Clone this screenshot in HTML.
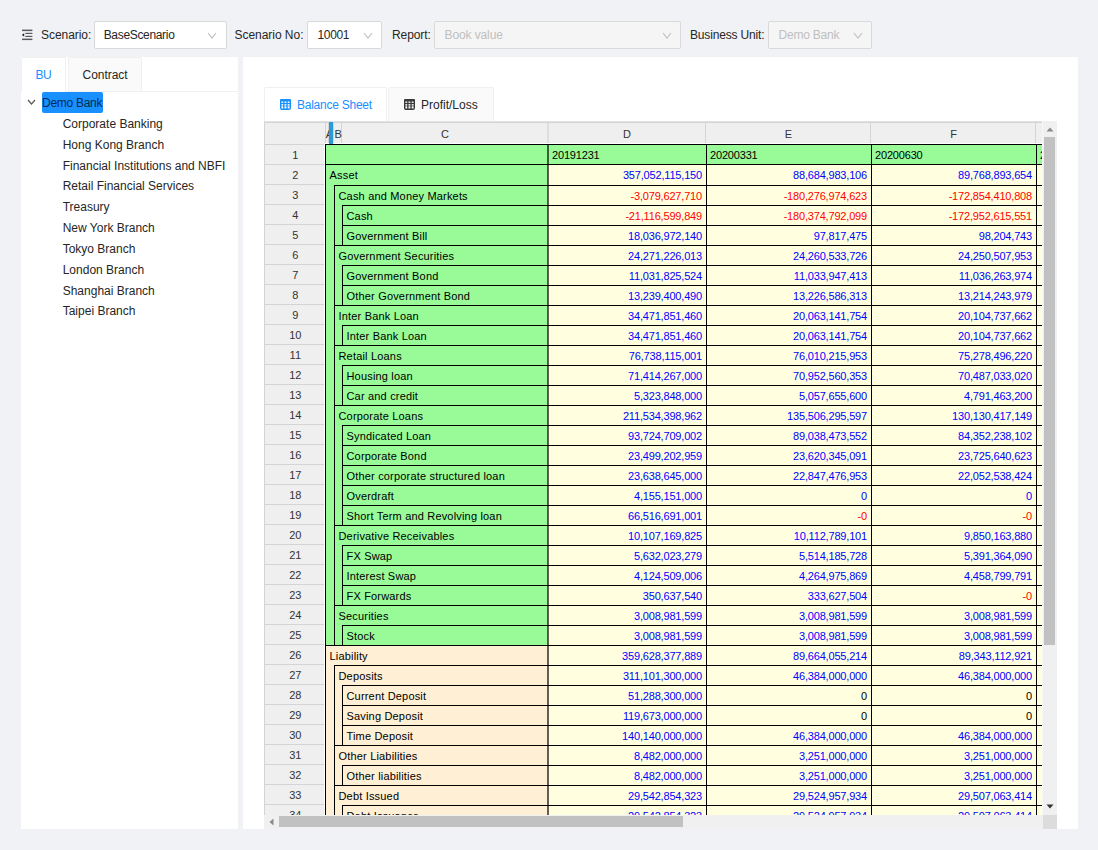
<!DOCTYPE html>
<html><head><meta charset="utf-8"><style>
html,body{margin:0;padding:0}
body{width:1098px;height:850px;background:#f0f2f5;position:relative;overflow:hidden;font-family:"Liberation Sans", sans-serif}
.t{position:absolute;white-space:nowrap;line-height:1;font-family:"Liberation Sans", sans-serif}
.r{position:absolute}
.sel{position:absolute;background:#fff;border:1px solid #d9d9d9;border-radius:2px}
.sel.dis{background:#f5f5f5}

</style></head><body>
<svg class="r" style="left:21px;top:29px" width="12" height="12" viewBox="0 0 12 12"><rect x="1" y="0.6" width="10.4" height="1.5" fill="#5a5a5a"/><rect x="4.4" y="3.8" width="7" height="1.2" fill="#5a5a5a"/><rect x="4.4" y="6.8" width="7" height="1.2" fill="#5a5a5a"/><rect x="1" y="9.6" width="10.4" height="1.5" fill="#5a5a5a"/><path d="M0.8 5.9 L3.2 4.2 L3.2 7.6 Z" fill="#1a1a1a"/></svg>
<div class="t" id="t_scen" style="left:41.00px;top:28.84px;font-size:12px;color:#262626;letter-spacing:-0.050px;">Scenario:</div>
<div class="sel" style="left:94px;top:21px;width:131px;height:26px"></div>
<div class="t" id="t_base" style="left:103.70px;top:28.84px;font-size:12px;color:#262626;letter-spacing:-0.327px;">BaseScenario</div>
<svg class="r" style="left:206.5px;top:31.5px" width="10" height="7" viewBox="0 0 10 7"><path d="M1 1 L5.0 6 L9 1" fill="none" stroke="#bfbfbf" stroke-width="1.1"/></svg>
<div class="t" id="t_scno" style="left:234.50px;top:28.84px;font-size:12px;color:#262626;letter-spacing:-0.036px;">Scenario No:</div>
<div class="sel" style="left:307px;top:21px;width:73px;height:26px"></div>
<div class="t" id="t_10001" style="left:317.60px;top:28.84px;font-size:12px;color:#262626;letter-spacing:-0.400px;">10001</div>
<svg class="r" style="left:362.5px;top:31.5px" width="10" height="7" viewBox="0 0 10 7"><path d="M1 1 L5.0 6 L9 1" fill="none" stroke="#bfbfbf" stroke-width="1.1"/></svg>
<div class="t" id="t_rep" style="left:392.00px;top:28.84px;font-size:12px;color:#262626;letter-spacing:-0.100px;">Report:</div>
<div class="sel dis" style="left:434px;top:21px;width:245px;height:26px"></div>
<div class="t" id="t_book" style="left:444.50px;top:28.84px;font-size:12px;color:#bfbfbf;letter-spacing:-0.111px;">Book value</div>
<svg class="r" style="left:661.5px;top:31.5px" width="10" height="7" viewBox="0 0 10 7"><path d="M1 1 L5.0 6 L9 1" fill="none" stroke="#bfbfbf" stroke-width="1.1"/></svg>
<div class="t" id="t_bu" style="left:690.00px;top:28.84px;font-size:12px;color:#262626;letter-spacing:-0.169px;">Business Unit:</div>
<div class="sel dis" style="left:768px;top:21px;width:102px;height:26px"></div>
<div class="t" id="t_dbdis" style="left:778.60px;top:28.84px;font-size:12px;color:#bfbfbf;letter-spacing:-0.225px;">Demo Bank</div>
<svg class="r" style="left:852.5px;top:31.5px" width="10" height="7" viewBox="0 0 10 7"><path d="M1 1 L5.0 6 L9 1" fill="none" stroke="#bfbfbf" stroke-width="1.1"/></svg>
<div class="r" style="left:21px;top:57px;width:217px;height:772px;background:#fff;"></div>
<div class="r" style="left:21px;top:91px;width:217px;height:1px;background:#f0f0f0;"></div>
<div class="r" style="left:21px;top:57px;width:43px;height:34px;background:#fff;border:1px solid #f0f0f0;border-bottom:none;border-radius:2px 2px 0 0"></div>
<div class="r" style="left:22px;top:91px;width:43px;height:1px;background:#fff;"></div>
<div class="t" id="t_tabbu" style="left:35.50px;top:68.84px;font-size:12px;color:#1890ff;letter-spacing:-0.600px;">BU</div>
<div class="r" style="left:68px;top:57px;width:72px;height:33px;background:#fafafa;border:1px solid #f0f0f0;border-radius:2px 2px 0 0"></div>
<div class="t" id="t_contract" style="left:82.50px;top:68.84px;font-size:12px;color:#262626;letter-spacing:-0.029px;">Contract</div>
<svg class="r" style="left:27px;top:99px" width="9" height="6" viewBox="0 0 9 6"><path d="M1 1 L4.5 5 L8 1" fill="none" stroke="#595959" stroke-width="1.2"/></svg>
<div class="r" style="left:42px;top:92px;width:61px;height:21px;background:#1890ff;border-radius:2px"></div>
<div class="t" id="t_dbtree" style="left:42.00px;top:96.84px;font-size:12px;color:#002b55;letter-spacing:-0.275px;">Demo Bank</div>
<div class="t" style="left:62.70px;top:117.84px;font-size:12px;color:#262626;">Corporate Banking</div>
<div class="t" style="left:62.70px;top:138.69px;font-size:12px;color:#262626;">Hong Kong Branch</div>
<div class="t" style="left:62.70px;top:159.54px;font-size:12px;color:#262626;">Financial Institutions and NBFI</div>
<div class="t" style="left:62.70px;top:180.39px;font-size:12px;color:#262626;">Retail Financial Services</div>
<div class="t" style="left:62.70px;top:201.24px;font-size:12px;color:#262626;">Treasury</div>
<div class="t" style="left:62.70px;top:222.09px;font-size:12px;color:#262626;">New York Branch</div>
<div class="t" style="left:62.70px;top:242.94px;font-size:12px;color:#262626;">Tokyo Branch</div>
<div class="t" style="left:62.70px;top:263.79px;font-size:12px;color:#262626;">London Branch</div>
<div class="t" style="left:62.70px;top:284.64px;font-size:12px;color:#262626;">Shanghai Branch</div>
<div class="t" style="left:62.70px;top:305.49px;font-size:12px;color:#262626;">Taipei Branch</div>
<div class="r" style="left:243px;top:57px;width:835px;height:772px;background:#fff;"></div>
<div class="r" style="left:264px;top:87px;width:121px;height:34px;background:#fff;border:1px solid #f0f0f0;border-bottom:none;border-radius:2px 2px 0 0"></div>
<div class="r" style="left:388px;top:87px;width:104px;height:33px;background:#fafafa;border:1px solid #f0f0f0;border-bottom:none;border-radius:2px 2px 0 0"></div>
<svg class="r" style="left:280px;top:99px" width="11" height="11" viewBox="0 0 11 11"><rect x="0.7" y="0.7" width="9.6" height="9.6" rx="1.3" fill="none" stroke="#1890ff" stroke-width="1.4"/><rect x="0" y="0" width="11" height="2.6" rx="1.2" fill="#1890ff"/><rect x="0" y="3.9" width="11" height="1.2" fill="#1890ff"/><rect x="0" y="6.4" width="11" height="1.1" fill="#1890ff" fill-opacity="0.6"/><rect x="3.2" y="0" width="1.3" height="11" fill="#1890ff"/><rect x="6.4" y="0" width="1.3" height="11" fill="#1890ff"/></svg>
<div class="t" id="t_bs" style="left:297.00px;top:99.04px;font-size:12px;color:#1890ff;letter-spacing:-0.250px;">Balance Sheet</div>
<svg class="r" style="left:404px;top:99px" width="11" height="11" viewBox="0 0 11 11"><rect x="0.7" y="0.7" width="9.6" height="9.6" rx="1.3" fill="none" stroke="#3a3a3a" stroke-width="1.4"/><rect x="0" y="0" width="11" height="2.6" rx="1.2" fill="#3a3a3a"/><rect x="0" y="3.9" width="11" height="1.2" fill="#3a3a3a"/><rect x="0" y="6.4" width="11" height="1.1" fill="#3a3a3a" fill-opacity="0.6"/><rect x="3.2" y="0" width="1.3" height="11" fill="#3a3a3a"/><rect x="6.4" y="0" width="1.3" height="11" fill="#3a3a3a"/></svg>
<div class="t" id="t_pl" style="left:421.00px;top:99.04px;font-size:12px;color:#262626;">Profit/Loss</div>
<div class="r" style="left:264px;top:121px;width:778px;height:1px;background:#e2e2e2;"></div>
<div class="r" style="left:264px;top:122px;width:778px;height:1px;background:#d4d4d4;"></div>
<div class="r" style="left:264px;top:123px;width:778px;height:21px;background:#efefef;"></div>
<div class="r" style="left:325px;top:143px;width:717px;height:1px;background:#fff;"></div>
<div class="r" style="left:264px;top:123px;width:1px;height:692px;background:#d4d4d4;"></div>
<div class="r" style="left:265px;top:144px;width:59px;height:671px;background:#efefef;"></div>
<div class="r" style="left:265px;top:144px;width:59px;height:1px;background:#d4d4d4;"></div>
<div class="r" style="left:324px;top:144px;width:1px;height:671px;background:#fff;"></div>
<div class="r" style="left:325px;top:123px;width:1px;height:20px;background:#d4d4d4;"></div>
<div class="r" style="left:328px;top:123px;width:1px;height:20px;background:#d4d4d4;"></div>
<div class="r" style="left:333px;top:123px;width:1px;height:20px;background:#d4d4d4;"></div>
<div class="r" style="left:341px;top:123px;width:1px;height:20px;background:#d4d4d4;"></div>
<div class="r" style="left:705px;top:123px;width:1px;height:20px;background:#d4d4d4;"></div>
<div class="r" style="left:870px;top:123px;width:1px;height:20px;background:#d4d4d4;"></div>
<div class="r" style="left:1035px;top:123px;width:1px;height:20px;background:#d4d4d4;"></div>
<div class="r" style="left:547px;top:123px;width:2px;height:20px;background:#dedede;"></div>
<div class="t" style="left:345px;width:200px;top:128.69px;font-size:11px;color:#333;text-align:center;">C</div>
<div class="t" style="left:527px;width:200px;top:128.69px;font-size:11px;color:#333;text-align:center;">D</div>
<div class="t" style="left:688.5px;width:200px;top:128.69px;font-size:11px;color:#333;text-align:center;">E</div>
<div class="t" style="left:853.5px;width:200px;top:128.69px;font-size:11px;color:#333;text-align:center;">F</div>
<div class="r" style="left:329px;top:122px;width:4px;height:22px;background:#2d9ad8;"></div>
<div class="r" style="left:325px;top:123px;width:4px;height:20px;overflow:hidden"><div class="t" style="left:0.80px;top:5.69px;font-size:11px;color:#333;">A</div></div>
<div class="t" style="left:334.50px;top:128.69px;font-size:11px;color:#333;">B</div>
<div class="r" style="left:0;top:144px;width:1042px;height:671px;overflow:hidden">
<div class="r" style="left:325px;top:0px;width:223px;height:20px;background:#98fb98;"></div>
<div class="r" style="left:548px;top:0px;width:494px;height:20px;background:#98fb98;"></div>
<div class="r" style="left:325px;top:0px;width:717px;height:1px;background:#000;"></div>
<div class="r" style="left:325px;top:0px;width:1px;height:21px;background:#000;"></div>
<div class="r" style="left:547px;top:0px;width:2px;height:21px;background:rgba(0,0,0,0.62);"></div>
<div class="r" style="left:706px;top:0px;width:1px;height:21px;background:#000;"></div>
<div class="r" style="left:871px;top:0px;width:1px;height:21px;background:#000;"></div>
<div class="r" style="left:1036px;top:0px;width:1px;height:21px;background:#000;"></div>
<div class="t" style="left:552.00px;top:5.69px;font-size:11px;color:#000;letter-spacing:-0.18px">20191231</div>
<div class="t" style="left:710.00px;top:5.69px;font-size:11px;color:#000;letter-spacing:-0.18px">20200331</div>
<div class="t" style="left:875.00px;top:5.69px;font-size:11px;color:#000;letter-spacing:-0.18px">20200630</div>
<div class="t" style="left:1040.00px;top:5.69px;font-size:11px;color:#000;">2</div>
<div class="r" style="left:325px;top:20px;width:223px;height:21px;background:#98fb98;"></div>
<div class="r" style="left:548px;top:20px;width:494px;height:21px;background:#ffffe0;"></div>
<div class="r" style="left:325px;top:20px;width:717px;height:1px;background:#000;"></div>
<div class="r" style="left:325px;top:20px;width:1px;height:22px;background:#000;"></div>
<div class="r" style="left:547px;top:20px;width:2px;height:22px;background:rgba(0,0,0,0.62);"></div>
<div class="r" style="left:706px;top:20px;width:1px;height:22px;background:#000;"></div>
<div class="r" style="left:871px;top:20px;width:1px;height:22px;background:#000;"></div>
<div class="r" style="left:1036px;top:20px;width:1px;height:22px;background:#000;"></div>
<div class="t" style="left:329.50px;top:25.69px;font-size:11px;color:#000;letter-spacing:0.18px">Asset</div>
<div class="t" style="left:402px;width:300px;top:25.69px;font-size:11px;color:#0000ff;text-align:right;letter-spacing:-0.18px">357,052,115,150</div>
<div class="t" style="left:567px;width:300px;top:25.69px;font-size:11px;color:#0000ff;text-align:right;letter-spacing:-0.18px">88,684,983,106</div>
<div class="t" style="left:732px;width:300px;top:25.69px;font-size:11px;color:#0000ff;text-align:right;letter-spacing:-0.18px">89,768,893,654</div>
<div class="r" style="left:325px;top:41px;width:223px;height:20px;background:#98fb98;"></div>
<div class="r" style="left:548px;top:41px;width:494px;height:20px;background:#ffffe0;"></div>
<div class="r" style="left:334px;top:41px;width:708px;height:1px;background:#000;"></div>
<div class="r" style="left:325px;top:41px;width:1px;height:21px;background:#000;"></div>
<div class="r" style="left:334px;top:41px;width:1px;height:21px;background:#000;"></div>
<div class="r" style="left:547px;top:41px;width:2px;height:21px;background:rgba(0,0,0,0.62);"></div>
<div class="r" style="left:706px;top:41px;width:1px;height:21px;background:#000;"></div>
<div class="r" style="left:871px;top:41px;width:1px;height:21px;background:#000;"></div>
<div class="r" style="left:1036px;top:41px;width:1px;height:21px;background:#000;"></div>
<div class="t" style="left:338.50px;top:46.69px;font-size:11px;color:#000;letter-spacing:0.18px">Cash and Money Markets</div>
<div class="t" style="left:402px;width:300px;top:46.69px;font-size:11px;color:#ff0000;text-align:right;letter-spacing:-0.18px">-3,079,627,710</div>
<div class="t" style="left:567px;width:300px;top:46.69px;font-size:11px;color:#ff0000;text-align:right;letter-spacing:-0.18px">-180,276,974,623</div>
<div class="t" style="left:732px;width:300px;top:46.69px;font-size:11px;color:#ff0000;text-align:right;letter-spacing:-0.18px">-172,854,410,808</div>
<div class="r" style="left:325px;top:61px;width:223px;height:20px;background:#98fb98;"></div>
<div class="r" style="left:548px;top:61px;width:494px;height:20px;background:#ffffe0;"></div>
<div class="r" style="left:342px;top:61px;width:700px;height:1px;background:#000;"></div>
<div class="r" style="left:325px;top:61px;width:1px;height:21px;background:#000;"></div>
<div class="r" style="left:334px;top:61px;width:1px;height:21px;background:#000;"></div>
<div class="r" style="left:342px;top:61px;width:1px;height:21px;background:#000;"></div>
<div class="r" style="left:547px;top:61px;width:2px;height:21px;background:rgba(0,0,0,0.62);"></div>
<div class="r" style="left:706px;top:61px;width:1px;height:21px;background:#000;"></div>
<div class="r" style="left:871px;top:61px;width:1px;height:21px;background:#000;"></div>
<div class="r" style="left:1036px;top:61px;width:1px;height:21px;background:#000;"></div>
<div class="t" style="left:346.50px;top:66.69px;font-size:11px;color:#000;letter-spacing:0.18px">Cash</div>
<div class="t" style="left:402px;width:300px;top:66.69px;font-size:11px;color:#ff0000;text-align:right;letter-spacing:-0.18px">-21,116,599,849</div>
<div class="t" style="left:567px;width:300px;top:66.69px;font-size:11px;color:#ff0000;text-align:right;letter-spacing:-0.18px">-180,374,792,099</div>
<div class="t" style="left:732px;width:300px;top:66.69px;font-size:11px;color:#ff0000;text-align:right;letter-spacing:-0.18px">-172,952,615,551</div>
<div class="r" style="left:325px;top:81px;width:223px;height:20px;background:#98fb98;"></div>
<div class="r" style="left:548px;top:81px;width:494px;height:20px;background:#ffffe0;"></div>
<div class="r" style="left:342px;top:81px;width:700px;height:1px;background:#000;"></div>
<div class="r" style="left:325px;top:81px;width:1px;height:21px;background:#000;"></div>
<div class="r" style="left:334px;top:81px;width:1px;height:21px;background:#000;"></div>
<div class="r" style="left:342px;top:81px;width:1px;height:21px;background:#000;"></div>
<div class="r" style="left:547px;top:81px;width:2px;height:21px;background:rgba(0,0,0,0.62);"></div>
<div class="r" style="left:706px;top:81px;width:1px;height:21px;background:#000;"></div>
<div class="r" style="left:871px;top:81px;width:1px;height:21px;background:#000;"></div>
<div class="r" style="left:1036px;top:81px;width:1px;height:21px;background:#000;"></div>
<div class="t" style="left:346.50px;top:86.69px;font-size:11px;color:#000;letter-spacing:0.18px">Government Bill</div>
<div class="t" style="left:402px;width:300px;top:86.69px;font-size:11px;color:#0000ff;text-align:right;letter-spacing:-0.18px">18,036,972,140</div>
<div class="t" style="left:567px;width:300px;top:86.69px;font-size:11px;color:#0000ff;text-align:right;letter-spacing:-0.18px">97,817,475</div>
<div class="t" style="left:732px;width:300px;top:86.69px;font-size:11px;color:#0000ff;text-align:right;letter-spacing:-0.18px">98,204,743</div>
<div class="r" style="left:325px;top:101px;width:223px;height:20px;background:#98fb98;"></div>
<div class="r" style="left:548px;top:101px;width:494px;height:20px;background:#ffffe0;"></div>
<div class="r" style="left:334px;top:101px;width:708px;height:1px;background:#000;"></div>
<div class="r" style="left:325px;top:101px;width:1px;height:21px;background:#000;"></div>
<div class="r" style="left:334px;top:101px;width:1px;height:21px;background:#000;"></div>
<div class="r" style="left:547px;top:101px;width:2px;height:21px;background:rgba(0,0,0,0.62);"></div>
<div class="r" style="left:706px;top:101px;width:1px;height:21px;background:#000;"></div>
<div class="r" style="left:871px;top:101px;width:1px;height:21px;background:#000;"></div>
<div class="r" style="left:1036px;top:101px;width:1px;height:21px;background:#000;"></div>
<div class="t" style="left:338.50px;top:106.69px;font-size:11px;color:#000;letter-spacing:0.18px">Government Securities</div>
<div class="t" style="left:402px;width:300px;top:106.69px;font-size:11px;color:#0000ff;text-align:right;letter-spacing:-0.18px">24,271,226,013</div>
<div class="t" style="left:567px;width:300px;top:106.69px;font-size:11px;color:#0000ff;text-align:right;letter-spacing:-0.18px">24,260,533,726</div>
<div class="t" style="left:732px;width:300px;top:106.69px;font-size:11px;color:#0000ff;text-align:right;letter-spacing:-0.18px">24,250,507,953</div>
<div class="r" style="left:325px;top:121px;width:223px;height:20px;background:#98fb98;"></div>
<div class="r" style="left:548px;top:121px;width:494px;height:20px;background:#ffffe0;"></div>
<div class="r" style="left:342px;top:121px;width:700px;height:1px;background:#000;"></div>
<div class="r" style="left:325px;top:121px;width:1px;height:21px;background:#000;"></div>
<div class="r" style="left:334px;top:121px;width:1px;height:21px;background:#000;"></div>
<div class="r" style="left:342px;top:121px;width:1px;height:21px;background:#000;"></div>
<div class="r" style="left:547px;top:121px;width:2px;height:21px;background:rgba(0,0,0,0.62);"></div>
<div class="r" style="left:706px;top:121px;width:1px;height:21px;background:#000;"></div>
<div class="r" style="left:871px;top:121px;width:1px;height:21px;background:#000;"></div>
<div class="r" style="left:1036px;top:121px;width:1px;height:21px;background:#000;"></div>
<div class="t" style="left:346.50px;top:126.69px;font-size:11px;color:#000;letter-spacing:0.18px">Government Bond</div>
<div class="t" style="left:402px;width:300px;top:126.69px;font-size:11px;color:#0000ff;text-align:right;letter-spacing:-0.18px">11,031,825,524</div>
<div class="t" style="left:567px;width:300px;top:126.69px;font-size:11px;color:#0000ff;text-align:right;letter-spacing:-0.18px">11,033,947,413</div>
<div class="t" style="left:732px;width:300px;top:126.69px;font-size:11px;color:#0000ff;text-align:right;letter-spacing:-0.18px">11,036,263,974</div>
<div class="r" style="left:325px;top:141px;width:223px;height:20px;background:#98fb98;"></div>
<div class="r" style="left:548px;top:141px;width:494px;height:20px;background:#ffffe0;"></div>
<div class="r" style="left:342px;top:141px;width:700px;height:1px;background:#000;"></div>
<div class="r" style="left:325px;top:141px;width:1px;height:21px;background:#000;"></div>
<div class="r" style="left:334px;top:141px;width:1px;height:21px;background:#000;"></div>
<div class="r" style="left:342px;top:141px;width:1px;height:21px;background:#000;"></div>
<div class="r" style="left:547px;top:141px;width:2px;height:21px;background:rgba(0,0,0,0.62);"></div>
<div class="r" style="left:706px;top:141px;width:1px;height:21px;background:#000;"></div>
<div class="r" style="left:871px;top:141px;width:1px;height:21px;background:#000;"></div>
<div class="r" style="left:1036px;top:141px;width:1px;height:21px;background:#000;"></div>
<div class="t" style="left:346.50px;top:146.69px;font-size:11px;color:#000;letter-spacing:0.18px">Other Government Bond</div>
<div class="t" style="left:402px;width:300px;top:146.69px;font-size:11px;color:#0000ff;text-align:right;letter-spacing:-0.18px">13,239,400,490</div>
<div class="t" style="left:567px;width:300px;top:146.69px;font-size:11px;color:#0000ff;text-align:right;letter-spacing:-0.18px">13,226,586,313</div>
<div class="t" style="left:732px;width:300px;top:146.69px;font-size:11px;color:#0000ff;text-align:right;letter-spacing:-0.18px">13,214,243,979</div>
<div class="r" style="left:325px;top:161px;width:223px;height:20px;background:#98fb98;"></div>
<div class="r" style="left:548px;top:161px;width:494px;height:20px;background:#ffffe0;"></div>
<div class="r" style="left:334px;top:161px;width:708px;height:1px;background:#000;"></div>
<div class="r" style="left:325px;top:161px;width:1px;height:21px;background:#000;"></div>
<div class="r" style="left:334px;top:161px;width:1px;height:21px;background:#000;"></div>
<div class="r" style="left:547px;top:161px;width:2px;height:21px;background:rgba(0,0,0,0.62);"></div>
<div class="r" style="left:706px;top:161px;width:1px;height:21px;background:#000;"></div>
<div class="r" style="left:871px;top:161px;width:1px;height:21px;background:#000;"></div>
<div class="r" style="left:1036px;top:161px;width:1px;height:21px;background:#000;"></div>
<div class="t" style="left:338.50px;top:166.69px;font-size:11px;color:#000;letter-spacing:0.18px">Inter Bank Loan</div>
<div class="t" style="left:402px;width:300px;top:166.69px;font-size:11px;color:#0000ff;text-align:right;letter-spacing:-0.18px">34,471,851,460</div>
<div class="t" style="left:567px;width:300px;top:166.69px;font-size:11px;color:#0000ff;text-align:right;letter-spacing:-0.18px">20,063,141,754</div>
<div class="t" style="left:732px;width:300px;top:166.69px;font-size:11px;color:#0000ff;text-align:right;letter-spacing:-0.18px">20,104,737,662</div>
<div class="r" style="left:325px;top:181px;width:223px;height:20px;background:#98fb98;"></div>
<div class="r" style="left:548px;top:181px;width:494px;height:20px;background:#ffffe0;"></div>
<div class="r" style="left:342px;top:181px;width:700px;height:1px;background:#000;"></div>
<div class="r" style="left:325px;top:181px;width:1px;height:21px;background:#000;"></div>
<div class="r" style="left:334px;top:181px;width:1px;height:21px;background:#000;"></div>
<div class="r" style="left:342px;top:181px;width:1px;height:21px;background:#000;"></div>
<div class="r" style="left:547px;top:181px;width:2px;height:21px;background:rgba(0,0,0,0.62);"></div>
<div class="r" style="left:706px;top:181px;width:1px;height:21px;background:#000;"></div>
<div class="r" style="left:871px;top:181px;width:1px;height:21px;background:#000;"></div>
<div class="r" style="left:1036px;top:181px;width:1px;height:21px;background:#000;"></div>
<div class="t" style="left:346.50px;top:186.69px;font-size:11px;color:#000;letter-spacing:0.18px">Inter Bank Loan</div>
<div class="t" style="left:402px;width:300px;top:186.69px;font-size:11px;color:#0000ff;text-align:right;letter-spacing:-0.18px">34,471,851,460</div>
<div class="t" style="left:567px;width:300px;top:186.69px;font-size:11px;color:#0000ff;text-align:right;letter-spacing:-0.18px">20,063,141,754</div>
<div class="t" style="left:732px;width:300px;top:186.69px;font-size:11px;color:#0000ff;text-align:right;letter-spacing:-0.18px">20,104,737,662</div>
<div class="r" style="left:325px;top:201px;width:223px;height:20px;background:#98fb98;"></div>
<div class="r" style="left:548px;top:201px;width:494px;height:20px;background:#ffffe0;"></div>
<div class="r" style="left:334px;top:201px;width:708px;height:1px;background:#000;"></div>
<div class="r" style="left:325px;top:201px;width:1px;height:21px;background:#000;"></div>
<div class="r" style="left:334px;top:201px;width:1px;height:21px;background:#000;"></div>
<div class="r" style="left:547px;top:201px;width:2px;height:21px;background:rgba(0,0,0,0.62);"></div>
<div class="r" style="left:706px;top:201px;width:1px;height:21px;background:#000;"></div>
<div class="r" style="left:871px;top:201px;width:1px;height:21px;background:#000;"></div>
<div class="r" style="left:1036px;top:201px;width:1px;height:21px;background:#000;"></div>
<div class="t" style="left:338.50px;top:206.69px;font-size:11px;color:#000;letter-spacing:0.18px">Retail Loans</div>
<div class="t" style="left:402px;width:300px;top:206.69px;font-size:11px;color:#0000ff;text-align:right;letter-spacing:-0.18px">76,738,115,001</div>
<div class="t" style="left:567px;width:300px;top:206.69px;font-size:11px;color:#0000ff;text-align:right;letter-spacing:-0.18px">76,010,215,953</div>
<div class="t" style="left:732px;width:300px;top:206.69px;font-size:11px;color:#0000ff;text-align:right;letter-spacing:-0.18px">75,278,496,220</div>
<div class="r" style="left:325px;top:221px;width:223px;height:20px;background:#98fb98;"></div>
<div class="r" style="left:548px;top:221px;width:494px;height:20px;background:#ffffe0;"></div>
<div class="r" style="left:342px;top:221px;width:700px;height:1px;background:#000;"></div>
<div class="r" style="left:325px;top:221px;width:1px;height:21px;background:#000;"></div>
<div class="r" style="left:334px;top:221px;width:1px;height:21px;background:#000;"></div>
<div class="r" style="left:342px;top:221px;width:1px;height:21px;background:#000;"></div>
<div class="r" style="left:547px;top:221px;width:2px;height:21px;background:rgba(0,0,0,0.62);"></div>
<div class="r" style="left:706px;top:221px;width:1px;height:21px;background:#000;"></div>
<div class="r" style="left:871px;top:221px;width:1px;height:21px;background:#000;"></div>
<div class="r" style="left:1036px;top:221px;width:1px;height:21px;background:#000;"></div>
<div class="t" style="left:346.50px;top:226.69px;font-size:11px;color:#000;letter-spacing:0.18px">Housing loan</div>
<div class="t" style="left:402px;width:300px;top:226.69px;font-size:11px;color:#0000ff;text-align:right;letter-spacing:-0.18px">71,414,267,000</div>
<div class="t" style="left:567px;width:300px;top:226.69px;font-size:11px;color:#0000ff;text-align:right;letter-spacing:-0.18px">70,952,560,353</div>
<div class="t" style="left:732px;width:300px;top:226.69px;font-size:11px;color:#0000ff;text-align:right;letter-spacing:-0.18px">70,487,033,020</div>
<div class="r" style="left:325px;top:241px;width:223px;height:20px;background:#98fb98;"></div>
<div class="r" style="left:548px;top:241px;width:494px;height:20px;background:#ffffe0;"></div>
<div class="r" style="left:342px;top:241px;width:700px;height:1px;background:#000;"></div>
<div class="r" style="left:325px;top:241px;width:1px;height:21px;background:#000;"></div>
<div class="r" style="left:334px;top:241px;width:1px;height:21px;background:#000;"></div>
<div class="r" style="left:342px;top:241px;width:1px;height:21px;background:#000;"></div>
<div class="r" style="left:547px;top:241px;width:2px;height:21px;background:rgba(0,0,0,0.62);"></div>
<div class="r" style="left:706px;top:241px;width:1px;height:21px;background:#000;"></div>
<div class="r" style="left:871px;top:241px;width:1px;height:21px;background:#000;"></div>
<div class="r" style="left:1036px;top:241px;width:1px;height:21px;background:#000;"></div>
<div class="t" style="left:346.50px;top:246.69px;font-size:11px;color:#000;letter-spacing:0.18px">Car and credit</div>
<div class="t" style="left:402px;width:300px;top:246.69px;font-size:11px;color:#0000ff;text-align:right;letter-spacing:-0.18px">5,323,848,000</div>
<div class="t" style="left:567px;width:300px;top:246.69px;font-size:11px;color:#0000ff;text-align:right;letter-spacing:-0.18px">5,057,655,600</div>
<div class="t" style="left:732px;width:300px;top:246.69px;font-size:11px;color:#0000ff;text-align:right;letter-spacing:-0.18px">4,791,463,200</div>
<div class="r" style="left:325px;top:261px;width:223px;height:20px;background:#98fb98;"></div>
<div class="r" style="left:548px;top:261px;width:494px;height:20px;background:#ffffe0;"></div>
<div class="r" style="left:334px;top:261px;width:708px;height:1px;background:#000;"></div>
<div class="r" style="left:325px;top:261px;width:1px;height:21px;background:#000;"></div>
<div class="r" style="left:334px;top:261px;width:1px;height:21px;background:#000;"></div>
<div class="r" style="left:547px;top:261px;width:2px;height:21px;background:rgba(0,0,0,0.62);"></div>
<div class="r" style="left:706px;top:261px;width:1px;height:21px;background:#000;"></div>
<div class="r" style="left:871px;top:261px;width:1px;height:21px;background:#000;"></div>
<div class="r" style="left:1036px;top:261px;width:1px;height:21px;background:#000;"></div>
<div class="t" style="left:338.50px;top:266.69px;font-size:11px;color:#000;letter-spacing:0.18px">Corporate Loans</div>
<div class="t" style="left:402px;width:300px;top:266.69px;font-size:11px;color:#0000ff;text-align:right;letter-spacing:-0.18px">211,534,398,962</div>
<div class="t" style="left:567px;width:300px;top:266.69px;font-size:11px;color:#0000ff;text-align:right;letter-spacing:-0.18px">135,506,295,597</div>
<div class="t" style="left:732px;width:300px;top:266.69px;font-size:11px;color:#0000ff;text-align:right;letter-spacing:-0.18px">130,130,417,149</div>
<div class="r" style="left:325px;top:281px;width:223px;height:20px;background:#98fb98;"></div>
<div class="r" style="left:548px;top:281px;width:494px;height:20px;background:#ffffe0;"></div>
<div class="r" style="left:342px;top:281px;width:700px;height:1px;background:#000;"></div>
<div class="r" style="left:325px;top:281px;width:1px;height:21px;background:#000;"></div>
<div class="r" style="left:334px;top:281px;width:1px;height:21px;background:#000;"></div>
<div class="r" style="left:342px;top:281px;width:1px;height:21px;background:#000;"></div>
<div class="r" style="left:547px;top:281px;width:2px;height:21px;background:rgba(0,0,0,0.62);"></div>
<div class="r" style="left:706px;top:281px;width:1px;height:21px;background:#000;"></div>
<div class="r" style="left:871px;top:281px;width:1px;height:21px;background:#000;"></div>
<div class="r" style="left:1036px;top:281px;width:1px;height:21px;background:#000;"></div>
<div class="t" style="left:346.50px;top:286.69px;font-size:11px;color:#000;letter-spacing:0.18px">Syndicated Loan</div>
<div class="t" style="left:402px;width:300px;top:286.69px;font-size:11px;color:#0000ff;text-align:right;letter-spacing:-0.18px">93,724,709,002</div>
<div class="t" style="left:567px;width:300px;top:286.69px;font-size:11px;color:#0000ff;text-align:right;letter-spacing:-0.18px">89,038,473,552</div>
<div class="t" style="left:732px;width:300px;top:286.69px;font-size:11px;color:#0000ff;text-align:right;letter-spacing:-0.18px">84,352,238,102</div>
<div class="r" style="left:325px;top:301px;width:223px;height:20px;background:#98fb98;"></div>
<div class="r" style="left:548px;top:301px;width:494px;height:20px;background:#ffffe0;"></div>
<div class="r" style="left:342px;top:301px;width:700px;height:1px;background:#000;"></div>
<div class="r" style="left:325px;top:301px;width:1px;height:21px;background:#000;"></div>
<div class="r" style="left:334px;top:301px;width:1px;height:21px;background:#000;"></div>
<div class="r" style="left:342px;top:301px;width:1px;height:21px;background:#000;"></div>
<div class="r" style="left:547px;top:301px;width:2px;height:21px;background:rgba(0,0,0,0.62);"></div>
<div class="r" style="left:706px;top:301px;width:1px;height:21px;background:#000;"></div>
<div class="r" style="left:871px;top:301px;width:1px;height:21px;background:#000;"></div>
<div class="r" style="left:1036px;top:301px;width:1px;height:21px;background:#000;"></div>
<div class="t" style="left:346.50px;top:306.69px;font-size:11px;color:#000;letter-spacing:0.18px">Corporate Bond</div>
<div class="t" style="left:402px;width:300px;top:306.69px;font-size:11px;color:#0000ff;text-align:right;letter-spacing:-0.18px">23,499,202,959</div>
<div class="t" style="left:567px;width:300px;top:306.69px;font-size:11px;color:#0000ff;text-align:right;letter-spacing:-0.18px">23,620,345,091</div>
<div class="t" style="left:732px;width:300px;top:306.69px;font-size:11px;color:#0000ff;text-align:right;letter-spacing:-0.18px">23,725,640,623</div>
<div class="r" style="left:325px;top:321px;width:223px;height:20px;background:#98fb98;"></div>
<div class="r" style="left:548px;top:321px;width:494px;height:20px;background:#ffffe0;"></div>
<div class="r" style="left:342px;top:321px;width:700px;height:1px;background:#000;"></div>
<div class="r" style="left:325px;top:321px;width:1px;height:21px;background:#000;"></div>
<div class="r" style="left:334px;top:321px;width:1px;height:21px;background:#000;"></div>
<div class="r" style="left:342px;top:321px;width:1px;height:21px;background:#000;"></div>
<div class="r" style="left:547px;top:321px;width:2px;height:21px;background:rgba(0,0,0,0.62);"></div>
<div class="r" style="left:706px;top:321px;width:1px;height:21px;background:#000;"></div>
<div class="r" style="left:871px;top:321px;width:1px;height:21px;background:#000;"></div>
<div class="r" style="left:1036px;top:321px;width:1px;height:21px;background:#000;"></div>
<div class="t" style="left:346.50px;top:326.69px;font-size:11px;color:#000;letter-spacing:0.18px">Other corporate structured loan</div>
<div class="t" style="left:402px;width:300px;top:326.69px;font-size:11px;color:#0000ff;text-align:right;letter-spacing:-0.18px">23,638,645,000</div>
<div class="t" style="left:567px;width:300px;top:326.69px;font-size:11px;color:#0000ff;text-align:right;letter-spacing:-0.18px">22,847,476,953</div>
<div class="t" style="left:732px;width:300px;top:326.69px;font-size:11px;color:#0000ff;text-align:right;letter-spacing:-0.18px">22,052,538,424</div>
<div class="r" style="left:325px;top:341px;width:223px;height:20px;background:#98fb98;"></div>
<div class="r" style="left:548px;top:341px;width:494px;height:20px;background:#ffffe0;"></div>
<div class="r" style="left:342px;top:341px;width:700px;height:1px;background:#000;"></div>
<div class="r" style="left:325px;top:341px;width:1px;height:21px;background:#000;"></div>
<div class="r" style="left:334px;top:341px;width:1px;height:21px;background:#000;"></div>
<div class="r" style="left:342px;top:341px;width:1px;height:21px;background:#000;"></div>
<div class="r" style="left:547px;top:341px;width:2px;height:21px;background:rgba(0,0,0,0.62);"></div>
<div class="r" style="left:706px;top:341px;width:1px;height:21px;background:#000;"></div>
<div class="r" style="left:871px;top:341px;width:1px;height:21px;background:#000;"></div>
<div class="r" style="left:1036px;top:341px;width:1px;height:21px;background:#000;"></div>
<div class="t" style="left:346.50px;top:346.69px;font-size:11px;color:#000;letter-spacing:0.18px">Overdraft</div>
<div class="t" style="left:402px;width:300px;top:346.69px;font-size:11px;color:#0000ff;text-align:right;letter-spacing:-0.18px">4,155,151,000</div>
<div class="t" style="left:567px;width:300px;top:346.69px;font-size:11px;color:#0000ff;text-align:right;letter-spacing:-0.18px">0</div>
<div class="t" style="left:732px;width:300px;top:346.69px;font-size:11px;color:#0000ff;text-align:right;letter-spacing:-0.18px">0</div>
<div class="r" style="left:325px;top:361px;width:223px;height:20px;background:#98fb98;"></div>
<div class="r" style="left:548px;top:361px;width:494px;height:20px;background:#ffffe0;"></div>
<div class="r" style="left:342px;top:361px;width:700px;height:1px;background:#000;"></div>
<div class="r" style="left:325px;top:361px;width:1px;height:21px;background:#000;"></div>
<div class="r" style="left:334px;top:361px;width:1px;height:21px;background:#000;"></div>
<div class="r" style="left:342px;top:361px;width:1px;height:21px;background:#000;"></div>
<div class="r" style="left:547px;top:361px;width:2px;height:21px;background:rgba(0,0,0,0.62);"></div>
<div class="r" style="left:706px;top:361px;width:1px;height:21px;background:#000;"></div>
<div class="r" style="left:871px;top:361px;width:1px;height:21px;background:#000;"></div>
<div class="r" style="left:1036px;top:361px;width:1px;height:21px;background:#000;"></div>
<div class="t" style="left:346.50px;top:366.69px;font-size:11px;color:#000;letter-spacing:0.18px">Short Term and Revolving loan</div>
<div class="t" style="left:402px;width:300px;top:366.69px;font-size:11px;color:#0000ff;text-align:right;letter-spacing:-0.18px">66,516,691,001</div>
<div class="t" style="left:567px;width:300px;top:366.69px;font-size:11px;color:#ff0000;text-align:right;letter-spacing:-0.18px">-0</div>
<div class="t" style="left:732px;width:300px;top:366.69px;font-size:11px;color:#ff0000;text-align:right;letter-spacing:-0.18px">-0</div>
<div class="r" style="left:325px;top:381px;width:223px;height:20px;background:#98fb98;"></div>
<div class="r" style="left:548px;top:381px;width:494px;height:20px;background:#ffffe0;"></div>
<div class="r" style="left:334px;top:381px;width:708px;height:1px;background:#000;"></div>
<div class="r" style="left:325px;top:381px;width:1px;height:21px;background:#000;"></div>
<div class="r" style="left:334px;top:381px;width:1px;height:21px;background:#000;"></div>
<div class="r" style="left:547px;top:381px;width:2px;height:21px;background:rgba(0,0,0,0.62);"></div>
<div class="r" style="left:706px;top:381px;width:1px;height:21px;background:#000;"></div>
<div class="r" style="left:871px;top:381px;width:1px;height:21px;background:#000;"></div>
<div class="r" style="left:1036px;top:381px;width:1px;height:21px;background:#000;"></div>
<div class="t" style="left:338.50px;top:386.69px;font-size:11px;color:#000;letter-spacing:0.18px">Derivative Receivables</div>
<div class="t" style="left:402px;width:300px;top:386.69px;font-size:11px;color:#0000ff;text-align:right;letter-spacing:-0.18px">10,107,169,825</div>
<div class="t" style="left:567px;width:300px;top:386.69px;font-size:11px;color:#0000ff;text-align:right;letter-spacing:-0.18px">10,112,789,101</div>
<div class="t" style="left:732px;width:300px;top:386.69px;font-size:11px;color:#0000ff;text-align:right;letter-spacing:-0.18px">9,850,163,880</div>
<div class="r" style="left:325px;top:401px;width:223px;height:20px;background:#98fb98;"></div>
<div class="r" style="left:548px;top:401px;width:494px;height:20px;background:#ffffe0;"></div>
<div class="r" style="left:342px;top:401px;width:700px;height:1px;background:#000;"></div>
<div class="r" style="left:325px;top:401px;width:1px;height:21px;background:#000;"></div>
<div class="r" style="left:334px;top:401px;width:1px;height:21px;background:#000;"></div>
<div class="r" style="left:342px;top:401px;width:1px;height:21px;background:#000;"></div>
<div class="r" style="left:547px;top:401px;width:2px;height:21px;background:rgba(0,0,0,0.62);"></div>
<div class="r" style="left:706px;top:401px;width:1px;height:21px;background:#000;"></div>
<div class="r" style="left:871px;top:401px;width:1px;height:21px;background:#000;"></div>
<div class="r" style="left:1036px;top:401px;width:1px;height:21px;background:#000;"></div>
<div class="t" style="left:346.50px;top:406.69px;font-size:11px;color:#000;letter-spacing:0.18px">FX Swap</div>
<div class="t" style="left:402px;width:300px;top:406.69px;font-size:11px;color:#0000ff;text-align:right;letter-spacing:-0.18px">5,632,023,279</div>
<div class="t" style="left:567px;width:300px;top:406.69px;font-size:11px;color:#0000ff;text-align:right;letter-spacing:-0.18px">5,514,185,728</div>
<div class="t" style="left:732px;width:300px;top:406.69px;font-size:11px;color:#0000ff;text-align:right;letter-spacing:-0.18px">5,391,364,090</div>
<div class="r" style="left:325px;top:421px;width:223px;height:20px;background:#98fb98;"></div>
<div class="r" style="left:548px;top:421px;width:494px;height:20px;background:#ffffe0;"></div>
<div class="r" style="left:342px;top:421px;width:700px;height:1px;background:#000;"></div>
<div class="r" style="left:325px;top:421px;width:1px;height:21px;background:#000;"></div>
<div class="r" style="left:334px;top:421px;width:1px;height:21px;background:#000;"></div>
<div class="r" style="left:342px;top:421px;width:1px;height:21px;background:#000;"></div>
<div class="r" style="left:547px;top:421px;width:2px;height:21px;background:rgba(0,0,0,0.62);"></div>
<div class="r" style="left:706px;top:421px;width:1px;height:21px;background:#000;"></div>
<div class="r" style="left:871px;top:421px;width:1px;height:21px;background:#000;"></div>
<div class="r" style="left:1036px;top:421px;width:1px;height:21px;background:#000;"></div>
<div class="t" style="left:346.50px;top:426.69px;font-size:11px;color:#000;letter-spacing:0.18px">Interest Swap</div>
<div class="t" style="left:402px;width:300px;top:426.69px;font-size:11px;color:#0000ff;text-align:right;letter-spacing:-0.18px">4,124,509,006</div>
<div class="t" style="left:567px;width:300px;top:426.69px;font-size:11px;color:#0000ff;text-align:right;letter-spacing:-0.18px">4,264,975,869</div>
<div class="t" style="left:732px;width:300px;top:426.69px;font-size:11px;color:#0000ff;text-align:right;letter-spacing:-0.18px">4,458,799,791</div>
<div class="r" style="left:325px;top:441px;width:223px;height:20px;background:#98fb98;"></div>
<div class="r" style="left:548px;top:441px;width:494px;height:20px;background:#ffffe0;"></div>
<div class="r" style="left:342px;top:441px;width:700px;height:1px;background:#000;"></div>
<div class="r" style="left:325px;top:441px;width:1px;height:21px;background:#000;"></div>
<div class="r" style="left:334px;top:441px;width:1px;height:21px;background:#000;"></div>
<div class="r" style="left:342px;top:441px;width:1px;height:21px;background:#000;"></div>
<div class="r" style="left:547px;top:441px;width:2px;height:21px;background:rgba(0,0,0,0.62);"></div>
<div class="r" style="left:706px;top:441px;width:1px;height:21px;background:#000;"></div>
<div class="r" style="left:871px;top:441px;width:1px;height:21px;background:#000;"></div>
<div class="r" style="left:1036px;top:441px;width:1px;height:21px;background:#000;"></div>
<div class="t" style="left:346.50px;top:446.69px;font-size:11px;color:#000;letter-spacing:0.18px">FX Forwards</div>
<div class="t" style="left:402px;width:300px;top:446.69px;font-size:11px;color:#0000ff;text-align:right;letter-spacing:-0.18px">350,637,540</div>
<div class="t" style="left:567px;width:300px;top:446.69px;font-size:11px;color:#0000ff;text-align:right;letter-spacing:-0.18px">333,627,504</div>
<div class="t" style="left:732px;width:300px;top:446.69px;font-size:11px;color:#ff0000;text-align:right;letter-spacing:-0.18px">-0</div>
<div class="r" style="left:325px;top:461px;width:223px;height:20px;background:#98fb98;"></div>
<div class="r" style="left:548px;top:461px;width:494px;height:20px;background:#ffffe0;"></div>
<div class="r" style="left:334px;top:461px;width:708px;height:1px;background:#000;"></div>
<div class="r" style="left:325px;top:461px;width:1px;height:21px;background:#000;"></div>
<div class="r" style="left:334px;top:461px;width:1px;height:21px;background:#000;"></div>
<div class="r" style="left:547px;top:461px;width:2px;height:21px;background:rgba(0,0,0,0.62);"></div>
<div class="r" style="left:706px;top:461px;width:1px;height:21px;background:#000;"></div>
<div class="r" style="left:871px;top:461px;width:1px;height:21px;background:#000;"></div>
<div class="r" style="left:1036px;top:461px;width:1px;height:21px;background:#000;"></div>
<div class="t" style="left:338.50px;top:466.69px;font-size:11px;color:#000;letter-spacing:0.18px">Securities</div>
<div class="t" style="left:402px;width:300px;top:466.69px;font-size:11px;color:#0000ff;text-align:right;letter-spacing:-0.18px">3,008,981,599</div>
<div class="t" style="left:567px;width:300px;top:466.69px;font-size:11px;color:#0000ff;text-align:right;letter-spacing:-0.18px">3,008,981,599</div>
<div class="t" style="left:732px;width:300px;top:466.69px;font-size:11px;color:#0000ff;text-align:right;letter-spacing:-0.18px">3,008,981,599</div>
<div class="r" style="left:325px;top:481px;width:223px;height:20px;background:#98fb98;"></div>
<div class="r" style="left:548px;top:481px;width:494px;height:20px;background:#ffffe0;"></div>
<div class="r" style="left:342px;top:481px;width:700px;height:1px;background:#000;"></div>
<div class="r" style="left:325px;top:481px;width:1px;height:21px;background:#000;"></div>
<div class="r" style="left:334px;top:481px;width:1px;height:21px;background:#000;"></div>
<div class="r" style="left:342px;top:481px;width:1px;height:21px;background:#000;"></div>
<div class="r" style="left:547px;top:481px;width:2px;height:21px;background:rgba(0,0,0,0.62);"></div>
<div class="r" style="left:706px;top:481px;width:1px;height:21px;background:#000;"></div>
<div class="r" style="left:871px;top:481px;width:1px;height:21px;background:#000;"></div>
<div class="r" style="left:1036px;top:481px;width:1px;height:21px;background:#000;"></div>
<div class="t" style="left:346.50px;top:486.69px;font-size:11px;color:#000;letter-spacing:0.18px">Stock</div>
<div class="t" style="left:402px;width:300px;top:486.69px;font-size:11px;color:#0000ff;text-align:right;letter-spacing:-0.18px">3,008,981,599</div>
<div class="t" style="left:567px;width:300px;top:486.69px;font-size:11px;color:#0000ff;text-align:right;letter-spacing:-0.18px">3,008,981,599</div>
<div class="t" style="left:732px;width:300px;top:486.69px;font-size:11px;color:#0000ff;text-align:right;letter-spacing:-0.18px">3,008,981,599</div>
<div class="r" style="left:325px;top:501px;width:223px;height:20px;background:#ffefd5;"></div>
<div class="r" style="left:548px;top:501px;width:494px;height:20px;background:#ffffe0;"></div>
<div class="r" style="left:325px;top:501px;width:717px;height:1px;background:#000;"></div>
<div class="r" style="left:325px;top:501px;width:1px;height:21px;background:#000;"></div>
<div class="r" style="left:547px;top:501px;width:2px;height:21px;background:rgba(0,0,0,0.62);"></div>
<div class="r" style="left:706px;top:501px;width:1px;height:21px;background:#000;"></div>
<div class="r" style="left:871px;top:501px;width:1px;height:21px;background:#000;"></div>
<div class="r" style="left:1036px;top:501px;width:1px;height:21px;background:#000;"></div>
<div class="t" style="left:329.50px;top:506.69px;font-size:11px;color:#000;letter-spacing:0.18px">Liability</div>
<div class="t" style="left:402px;width:300px;top:506.69px;font-size:11px;color:#0000ff;text-align:right;letter-spacing:-0.18px">359,628,377,889</div>
<div class="t" style="left:567px;width:300px;top:506.69px;font-size:11px;color:#0000ff;text-align:right;letter-spacing:-0.18px">89,664,055,214</div>
<div class="t" style="left:732px;width:300px;top:506.69px;font-size:11px;color:#0000ff;text-align:right;letter-spacing:-0.18px">89,343,112,921</div>
<div class="r" style="left:325px;top:521px;width:223px;height:20px;background:#ffefd5;"></div>
<div class="r" style="left:548px;top:521px;width:494px;height:20px;background:#ffffe0;"></div>
<div class="r" style="left:334px;top:521px;width:708px;height:1px;background:#000;"></div>
<div class="r" style="left:325px;top:521px;width:1px;height:21px;background:#000;"></div>
<div class="r" style="left:334px;top:521px;width:1px;height:21px;background:#000;"></div>
<div class="r" style="left:547px;top:521px;width:2px;height:21px;background:rgba(0,0,0,0.62);"></div>
<div class="r" style="left:706px;top:521px;width:1px;height:21px;background:#000;"></div>
<div class="r" style="left:871px;top:521px;width:1px;height:21px;background:#000;"></div>
<div class="r" style="left:1036px;top:521px;width:1px;height:21px;background:#000;"></div>
<div class="t" style="left:338.50px;top:526.69px;font-size:11px;color:#000;letter-spacing:0.18px">Deposits</div>
<div class="t" style="left:402px;width:300px;top:526.69px;font-size:11px;color:#0000ff;text-align:right;letter-spacing:-0.18px">311,101,300,000</div>
<div class="t" style="left:567px;width:300px;top:526.69px;font-size:11px;color:#0000ff;text-align:right;letter-spacing:-0.18px">46,384,000,000</div>
<div class="t" style="left:732px;width:300px;top:526.69px;font-size:11px;color:#0000ff;text-align:right;letter-spacing:-0.18px">46,384,000,000</div>
<div class="r" style="left:325px;top:541px;width:223px;height:20px;background:#ffefd5;"></div>
<div class="r" style="left:548px;top:541px;width:494px;height:20px;background:#ffffe0;"></div>
<div class="r" style="left:342px;top:541px;width:700px;height:1px;background:#000;"></div>
<div class="r" style="left:325px;top:541px;width:1px;height:21px;background:#000;"></div>
<div class="r" style="left:334px;top:541px;width:1px;height:21px;background:#000;"></div>
<div class="r" style="left:342px;top:541px;width:1px;height:21px;background:#000;"></div>
<div class="r" style="left:547px;top:541px;width:2px;height:21px;background:rgba(0,0,0,0.62);"></div>
<div class="r" style="left:706px;top:541px;width:1px;height:21px;background:#000;"></div>
<div class="r" style="left:871px;top:541px;width:1px;height:21px;background:#000;"></div>
<div class="r" style="left:1036px;top:541px;width:1px;height:21px;background:#000;"></div>
<div class="t" style="left:346.50px;top:546.69px;font-size:11px;color:#000;letter-spacing:0.18px">Current Deposit</div>
<div class="t" style="left:402px;width:300px;top:546.69px;font-size:11px;color:#0000ff;text-align:right;letter-spacing:-0.18px">51,288,300,000</div>
<div class="t" style="left:567px;width:300px;top:546.69px;font-size:11px;color:#000;text-align:right;letter-spacing:-0.18px">0</div>
<div class="t" style="left:732px;width:300px;top:546.69px;font-size:11px;color:#000;text-align:right;letter-spacing:-0.18px">0</div>
<div class="r" style="left:325px;top:561px;width:223px;height:20px;background:#ffefd5;"></div>
<div class="r" style="left:548px;top:561px;width:494px;height:20px;background:#ffffe0;"></div>
<div class="r" style="left:342px;top:561px;width:700px;height:1px;background:#000;"></div>
<div class="r" style="left:325px;top:561px;width:1px;height:21px;background:#000;"></div>
<div class="r" style="left:334px;top:561px;width:1px;height:21px;background:#000;"></div>
<div class="r" style="left:342px;top:561px;width:1px;height:21px;background:#000;"></div>
<div class="r" style="left:547px;top:561px;width:2px;height:21px;background:rgba(0,0,0,0.62);"></div>
<div class="r" style="left:706px;top:561px;width:1px;height:21px;background:#000;"></div>
<div class="r" style="left:871px;top:561px;width:1px;height:21px;background:#000;"></div>
<div class="r" style="left:1036px;top:561px;width:1px;height:21px;background:#000;"></div>
<div class="t" style="left:346.50px;top:566.69px;font-size:11px;color:#000;letter-spacing:0.18px">Saving Deposit</div>
<div class="t" style="left:402px;width:300px;top:566.69px;font-size:11px;color:#0000ff;text-align:right;letter-spacing:-0.18px">119,673,000,000</div>
<div class="t" style="left:567px;width:300px;top:566.69px;font-size:11px;color:#000;text-align:right;letter-spacing:-0.18px">0</div>
<div class="t" style="left:732px;width:300px;top:566.69px;font-size:11px;color:#000;text-align:right;letter-spacing:-0.18px">0</div>
<div class="r" style="left:325px;top:581px;width:223px;height:20px;background:#ffefd5;"></div>
<div class="r" style="left:548px;top:581px;width:494px;height:20px;background:#ffffe0;"></div>
<div class="r" style="left:342px;top:581px;width:700px;height:1px;background:#000;"></div>
<div class="r" style="left:325px;top:581px;width:1px;height:21px;background:#000;"></div>
<div class="r" style="left:334px;top:581px;width:1px;height:21px;background:#000;"></div>
<div class="r" style="left:342px;top:581px;width:1px;height:21px;background:#000;"></div>
<div class="r" style="left:547px;top:581px;width:2px;height:21px;background:rgba(0,0,0,0.62);"></div>
<div class="r" style="left:706px;top:581px;width:1px;height:21px;background:#000;"></div>
<div class="r" style="left:871px;top:581px;width:1px;height:21px;background:#000;"></div>
<div class="r" style="left:1036px;top:581px;width:1px;height:21px;background:#000;"></div>
<div class="t" style="left:346.50px;top:586.69px;font-size:11px;color:#000;letter-spacing:0.18px">Time Deposit</div>
<div class="t" style="left:402px;width:300px;top:586.69px;font-size:11px;color:#0000ff;text-align:right;letter-spacing:-0.18px">140,140,000,000</div>
<div class="t" style="left:567px;width:300px;top:586.69px;font-size:11px;color:#0000ff;text-align:right;letter-spacing:-0.18px">46,384,000,000</div>
<div class="t" style="left:732px;width:300px;top:586.69px;font-size:11px;color:#0000ff;text-align:right;letter-spacing:-0.18px">46,384,000,000</div>
<div class="r" style="left:325px;top:601px;width:223px;height:20px;background:#ffefd5;"></div>
<div class="r" style="left:548px;top:601px;width:494px;height:20px;background:#ffffe0;"></div>
<div class="r" style="left:334px;top:601px;width:708px;height:1px;background:#000;"></div>
<div class="r" style="left:325px;top:601px;width:1px;height:21px;background:#000;"></div>
<div class="r" style="left:334px;top:601px;width:1px;height:21px;background:#000;"></div>
<div class="r" style="left:547px;top:601px;width:2px;height:21px;background:rgba(0,0,0,0.62);"></div>
<div class="r" style="left:706px;top:601px;width:1px;height:21px;background:#000;"></div>
<div class="r" style="left:871px;top:601px;width:1px;height:21px;background:#000;"></div>
<div class="r" style="left:1036px;top:601px;width:1px;height:21px;background:#000;"></div>
<div class="t" style="left:338.50px;top:606.69px;font-size:11px;color:#000;letter-spacing:0.18px">Other Liabilities</div>
<div class="t" style="left:402px;width:300px;top:606.69px;font-size:11px;color:#0000ff;text-align:right;letter-spacing:-0.18px">8,482,000,000</div>
<div class="t" style="left:567px;width:300px;top:606.69px;font-size:11px;color:#0000ff;text-align:right;letter-spacing:-0.18px">3,251,000,000</div>
<div class="t" style="left:732px;width:300px;top:606.69px;font-size:11px;color:#0000ff;text-align:right;letter-spacing:-0.18px">3,251,000,000</div>
<div class="r" style="left:325px;top:621px;width:223px;height:20px;background:#ffefd5;"></div>
<div class="r" style="left:548px;top:621px;width:494px;height:20px;background:#ffffe0;"></div>
<div class="r" style="left:342px;top:621px;width:700px;height:1px;background:#000;"></div>
<div class="r" style="left:325px;top:621px;width:1px;height:21px;background:#000;"></div>
<div class="r" style="left:334px;top:621px;width:1px;height:21px;background:#000;"></div>
<div class="r" style="left:342px;top:621px;width:1px;height:21px;background:#000;"></div>
<div class="r" style="left:547px;top:621px;width:2px;height:21px;background:rgba(0,0,0,0.62);"></div>
<div class="r" style="left:706px;top:621px;width:1px;height:21px;background:#000;"></div>
<div class="r" style="left:871px;top:621px;width:1px;height:21px;background:#000;"></div>
<div class="r" style="left:1036px;top:621px;width:1px;height:21px;background:#000;"></div>
<div class="t" style="left:346.50px;top:626.69px;font-size:11px;color:#000;letter-spacing:0.18px">Other liabilities</div>
<div class="t" style="left:402px;width:300px;top:626.69px;font-size:11px;color:#0000ff;text-align:right;letter-spacing:-0.18px">8,482,000,000</div>
<div class="t" style="left:567px;width:300px;top:626.69px;font-size:11px;color:#0000ff;text-align:right;letter-spacing:-0.18px">3,251,000,000</div>
<div class="t" style="left:732px;width:300px;top:626.69px;font-size:11px;color:#0000ff;text-align:right;letter-spacing:-0.18px">3,251,000,000</div>
<div class="r" style="left:325px;top:641px;width:223px;height:20px;background:#ffefd5;"></div>
<div class="r" style="left:548px;top:641px;width:494px;height:20px;background:#ffffe0;"></div>
<div class="r" style="left:334px;top:641px;width:708px;height:1px;background:#000;"></div>
<div class="r" style="left:325px;top:641px;width:1px;height:21px;background:#000;"></div>
<div class="r" style="left:334px;top:641px;width:1px;height:21px;background:#000;"></div>
<div class="r" style="left:547px;top:641px;width:2px;height:21px;background:rgba(0,0,0,0.62);"></div>
<div class="r" style="left:706px;top:641px;width:1px;height:21px;background:#000;"></div>
<div class="r" style="left:871px;top:641px;width:1px;height:21px;background:#000;"></div>
<div class="r" style="left:1036px;top:641px;width:1px;height:21px;background:#000;"></div>
<div class="t" style="left:338.50px;top:646.69px;font-size:11px;color:#000;letter-spacing:0.18px">Debt Issued</div>
<div class="t" style="left:402px;width:300px;top:646.69px;font-size:11px;color:#0000ff;text-align:right;letter-spacing:-0.18px">29,542,854,323</div>
<div class="t" style="left:567px;width:300px;top:646.69px;font-size:11px;color:#0000ff;text-align:right;letter-spacing:-0.18px">29,524,957,934</div>
<div class="t" style="left:732px;width:300px;top:646.69px;font-size:11px;color:#0000ff;text-align:right;letter-spacing:-0.18px">29,507,063,414</div>
<div class="r" style="left:325px;top:661px;width:223px;height:20px;background:#ffefd5;"></div>
<div class="r" style="left:548px;top:661px;width:494px;height:20px;background:#ffffe0;"></div>
<div class="r" style="left:342px;top:661px;width:700px;height:1px;background:#000;"></div>
<div class="r" style="left:325px;top:661px;width:1px;height:21px;background:#000;"></div>
<div class="r" style="left:334px;top:661px;width:1px;height:21px;background:#000;"></div>
<div class="r" style="left:342px;top:661px;width:1px;height:21px;background:#000;"></div>
<div class="r" style="left:547px;top:661px;width:2px;height:21px;background:rgba(0,0,0,0.62);"></div>
<div class="r" style="left:706px;top:661px;width:1px;height:21px;background:#000;"></div>
<div class="r" style="left:871px;top:661px;width:1px;height:21px;background:#000;"></div>
<div class="r" style="left:1036px;top:661px;width:1px;height:21px;background:#000;"></div>
<div class="t" style="left:346.50px;top:666.69px;font-size:11px;color:#000;letter-spacing:0.18px">Debt Issuance</div>
<div class="t" style="left:402px;width:300px;top:666.69px;font-size:11px;color:#0000ff;text-align:right;letter-spacing:-0.18px">29,542,854,323</div>
<div class="t" style="left:567px;width:300px;top:666.69px;font-size:11px;color:#0000ff;text-align:right;letter-spacing:-0.18px">29,524,957,934</div>
<div class="t" style="left:732px;width:300px;top:666.69px;font-size:11px;color:#0000ff;text-align:right;letter-spacing:-0.18px">29,507,063,414</div>
</div>
<div class="r" style="left:265px;top:164px;width:59px;height:1px;background:#d4d4d4;"></div>
<div class="r" style="left:265px;top:144px;width:59px;height:20px;overflow:hidden"><div class="t" style="left:0.8px;width:59px;top:5.69px;font-size:11px;color:#333;text-align:center">1</div></div>
<div class="r" style="left:265px;top:184px;width:59px;height:1px;background:#d4d4d4;"></div>
<div class="r" style="left:265px;top:164px;width:59px;height:20px;overflow:hidden"><div class="t" style="left:0.8px;width:59px;top:5.69px;font-size:11px;color:#333;text-align:center">2</div></div>
<div class="r" style="left:265px;top:204px;width:59px;height:1px;background:#d4d4d4;"></div>
<div class="r" style="left:265px;top:184px;width:59px;height:20px;overflow:hidden"><div class="t" style="left:0.8px;width:59px;top:5.69px;font-size:11px;color:#333;text-align:center">3</div></div>
<div class="r" style="left:265px;top:224px;width:59px;height:1px;background:#d4d4d4;"></div>
<div class="r" style="left:265px;top:204px;width:59px;height:20px;overflow:hidden"><div class="t" style="left:0.8px;width:59px;top:5.69px;font-size:11px;color:#333;text-align:center">4</div></div>
<div class="r" style="left:265px;top:244px;width:59px;height:1px;background:#d4d4d4;"></div>
<div class="r" style="left:265px;top:224px;width:59px;height:20px;overflow:hidden"><div class="t" style="left:0.8px;width:59px;top:5.69px;font-size:11px;color:#333;text-align:center">5</div></div>
<div class="r" style="left:265px;top:264px;width:59px;height:1px;background:#d4d4d4;"></div>
<div class="r" style="left:265px;top:244px;width:59px;height:20px;overflow:hidden"><div class="t" style="left:0.8px;width:59px;top:5.69px;font-size:11px;color:#333;text-align:center">6</div></div>
<div class="r" style="left:265px;top:284px;width:59px;height:1px;background:#d4d4d4;"></div>
<div class="r" style="left:265px;top:264px;width:59px;height:20px;overflow:hidden"><div class="t" style="left:0.8px;width:59px;top:5.69px;font-size:11px;color:#333;text-align:center">7</div></div>
<div class="r" style="left:265px;top:304px;width:59px;height:1px;background:#d4d4d4;"></div>
<div class="r" style="left:265px;top:284px;width:59px;height:20px;overflow:hidden"><div class="t" style="left:0.8px;width:59px;top:5.69px;font-size:11px;color:#333;text-align:center">8</div></div>
<div class="r" style="left:265px;top:324px;width:59px;height:1px;background:#d4d4d4;"></div>
<div class="r" style="left:265px;top:304px;width:59px;height:20px;overflow:hidden"><div class="t" style="left:0.8px;width:59px;top:5.69px;font-size:11px;color:#333;text-align:center">9</div></div>
<div class="r" style="left:265px;top:344px;width:59px;height:1px;background:#d4d4d4;"></div>
<div class="r" style="left:265px;top:324px;width:59px;height:20px;overflow:hidden"><div class="t" style="left:0.8px;width:59px;top:5.69px;font-size:11px;color:#333;text-align:center">10</div></div>
<div class="r" style="left:265px;top:364px;width:59px;height:1px;background:#d4d4d4;"></div>
<div class="r" style="left:265px;top:344px;width:59px;height:20px;overflow:hidden"><div class="t" style="left:0.8px;width:59px;top:5.69px;font-size:11px;color:#333;text-align:center">11</div></div>
<div class="r" style="left:265px;top:384px;width:59px;height:1px;background:#d4d4d4;"></div>
<div class="r" style="left:265px;top:364px;width:59px;height:20px;overflow:hidden"><div class="t" style="left:0.8px;width:59px;top:5.69px;font-size:11px;color:#333;text-align:center">12</div></div>
<div class="r" style="left:265px;top:404px;width:59px;height:1px;background:#d4d4d4;"></div>
<div class="r" style="left:265px;top:384px;width:59px;height:20px;overflow:hidden"><div class="t" style="left:0.8px;width:59px;top:5.69px;font-size:11px;color:#333;text-align:center">13</div></div>
<div class="r" style="left:265px;top:424px;width:59px;height:1px;background:#d4d4d4;"></div>
<div class="r" style="left:265px;top:404px;width:59px;height:20px;overflow:hidden"><div class="t" style="left:0.8px;width:59px;top:5.69px;font-size:11px;color:#333;text-align:center">14</div></div>
<div class="r" style="left:265px;top:444px;width:59px;height:1px;background:#d4d4d4;"></div>
<div class="r" style="left:265px;top:424px;width:59px;height:20px;overflow:hidden"><div class="t" style="left:0.8px;width:59px;top:5.69px;font-size:11px;color:#333;text-align:center">15</div></div>
<div class="r" style="left:265px;top:464px;width:59px;height:1px;background:#d4d4d4;"></div>
<div class="r" style="left:265px;top:444px;width:59px;height:20px;overflow:hidden"><div class="t" style="left:0.8px;width:59px;top:5.69px;font-size:11px;color:#333;text-align:center">16</div></div>
<div class="r" style="left:265px;top:484px;width:59px;height:1px;background:#d4d4d4;"></div>
<div class="r" style="left:265px;top:464px;width:59px;height:20px;overflow:hidden"><div class="t" style="left:0.8px;width:59px;top:5.69px;font-size:11px;color:#333;text-align:center">17</div></div>
<div class="r" style="left:265px;top:504px;width:59px;height:1px;background:#d4d4d4;"></div>
<div class="r" style="left:265px;top:484px;width:59px;height:20px;overflow:hidden"><div class="t" style="left:0.8px;width:59px;top:5.69px;font-size:11px;color:#333;text-align:center">18</div></div>
<div class="r" style="left:265px;top:524px;width:59px;height:1px;background:#d4d4d4;"></div>
<div class="r" style="left:265px;top:504px;width:59px;height:20px;overflow:hidden"><div class="t" style="left:0.8px;width:59px;top:5.69px;font-size:11px;color:#333;text-align:center">19</div></div>
<div class="r" style="left:265px;top:544px;width:59px;height:1px;background:#d4d4d4;"></div>
<div class="r" style="left:265px;top:524px;width:59px;height:20px;overflow:hidden"><div class="t" style="left:0.8px;width:59px;top:5.69px;font-size:11px;color:#333;text-align:center">20</div></div>
<div class="r" style="left:265px;top:564px;width:59px;height:1px;background:#d4d4d4;"></div>
<div class="r" style="left:265px;top:544px;width:59px;height:20px;overflow:hidden"><div class="t" style="left:0.8px;width:59px;top:5.69px;font-size:11px;color:#333;text-align:center">21</div></div>
<div class="r" style="left:265px;top:584px;width:59px;height:1px;background:#d4d4d4;"></div>
<div class="r" style="left:265px;top:564px;width:59px;height:20px;overflow:hidden"><div class="t" style="left:0.8px;width:59px;top:5.69px;font-size:11px;color:#333;text-align:center">22</div></div>
<div class="r" style="left:265px;top:604px;width:59px;height:1px;background:#d4d4d4;"></div>
<div class="r" style="left:265px;top:584px;width:59px;height:20px;overflow:hidden"><div class="t" style="left:0.8px;width:59px;top:5.69px;font-size:11px;color:#333;text-align:center">23</div></div>
<div class="r" style="left:265px;top:624px;width:59px;height:1px;background:#d4d4d4;"></div>
<div class="r" style="left:265px;top:604px;width:59px;height:20px;overflow:hidden"><div class="t" style="left:0.8px;width:59px;top:5.69px;font-size:11px;color:#333;text-align:center">24</div></div>
<div class="r" style="left:265px;top:644px;width:59px;height:1px;background:#d4d4d4;"></div>
<div class="r" style="left:265px;top:624px;width:59px;height:20px;overflow:hidden"><div class="t" style="left:0.8px;width:59px;top:5.69px;font-size:11px;color:#333;text-align:center">25</div></div>
<div class="r" style="left:265px;top:664px;width:59px;height:1px;background:#d4d4d4;"></div>
<div class="r" style="left:265px;top:644px;width:59px;height:20px;overflow:hidden"><div class="t" style="left:0.8px;width:59px;top:5.69px;font-size:11px;color:#333;text-align:center">26</div></div>
<div class="r" style="left:265px;top:684px;width:59px;height:1px;background:#d4d4d4;"></div>
<div class="r" style="left:265px;top:664px;width:59px;height:20px;overflow:hidden"><div class="t" style="left:0.8px;width:59px;top:5.69px;font-size:11px;color:#333;text-align:center">27</div></div>
<div class="r" style="left:265px;top:704px;width:59px;height:1px;background:#d4d4d4;"></div>
<div class="r" style="left:265px;top:684px;width:59px;height:20px;overflow:hidden"><div class="t" style="left:0.8px;width:59px;top:5.69px;font-size:11px;color:#333;text-align:center">28</div></div>
<div class="r" style="left:265px;top:724px;width:59px;height:1px;background:#d4d4d4;"></div>
<div class="r" style="left:265px;top:704px;width:59px;height:20px;overflow:hidden"><div class="t" style="left:0.8px;width:59px;top:5.69px;font-size:11px;color:#333;text-align:center">29</div></div>
<div class="r" style="left:265px;top:744px;width:59px;height:1px;background:#d4d4d4;"></div>
<div class="r" style="left:265px;top:724px;width:59px;height:20px;overflow:hidden"><div class="t" style="left:0.8px;width:59px;top:5.69px;font-size:11px;color:#333;text-align:center">30</div></div>
<div class="r" style="left:265px;top:764px;width:59px;height:1px;background:#d4d4d4;"></div>
<div class="r" style="left:265px;top:744px;width:59px;height:20px;overflow:hidden"><div class="t" style="left:0.8px;width:59px;top:5.69px;font-size:11px;color:#333;text-align:center">31</div></div>
<div class="r" style="left:265px;top:784px;width:59px;height:1px;background:#d4d4d4;"></div>
<div class="r" style="left:265px;top:764px;width:59px;height:20px;overflow:hidden"><div class="t" style="left:0.8px;width:59px;top:5.69px;font-size:11px;color:#333;text-align:center">32</div></div>
<div class="r" style="left:265px;top:804px;width:59px;height:1px;background:#d4d4d4;"></div>
<div class="r" style="left:265px;top:784px;width:59px;height:20px;overflow:hidden"><div class="t" style="left:0.8px;width:59px;top:5.69px;font-size:11px;color:#333;text-align:center">33</div></div>
<div class="r" style="left:265px;top:804px;width:59px;height:11px;overflow:hidden"><div class="t" style="left:0.8px;width:59px;top:5.69px;font-size:11px;color:#333;text-align:center">34</div></div>
<div class="r" style="left:1042px;top:121px;width:1px;height:694px;background:#f7f7f7;"></div>
<div class="r" style="left:1043px;top:121px;width:14px;height:694px;background:#f0f0f0;"></div>
<svg class="r" style="left:1046px;top:127px" width="8" height="5" viewBox="0 0 8 5"><path d="M0.5 4.5 L4 0.5 L7.5 4.5 Z" fill="#8a8a8a"/></svg>
<div class="r" style="left:1044px;top:137px;width:11px;height:508px;background:#c1c1c1;"></div>
<svg class="r" style="left:1046px;top:804px" width="8" height="5" viewBox="0 0 8 5"><path d="M0.5 0.5 L4 4.5 L7.5 0.5 Z" fill="#333"/></svg>
<div class="r" style="left:264px;top:815px;width:779px;height:14px;background:#f0f0f0;"></div>
<svg class="r" style="left:269px;top:818px" width="5" height="8" viewBox="0 0 5 8"><path d="M4.5 0.5 L0.5 4 L4.5 7.5 Z" fill="#8a8a8a"/></svg>
<div class="r" style="left:279px;top:816px;width:404px;height:11px;background:#c1c1c1;"></div>
<div class="r" style="left:1043px;top:815px;width:14px;height:14px;background:#dcdcdc;"></div>
</body></html>
